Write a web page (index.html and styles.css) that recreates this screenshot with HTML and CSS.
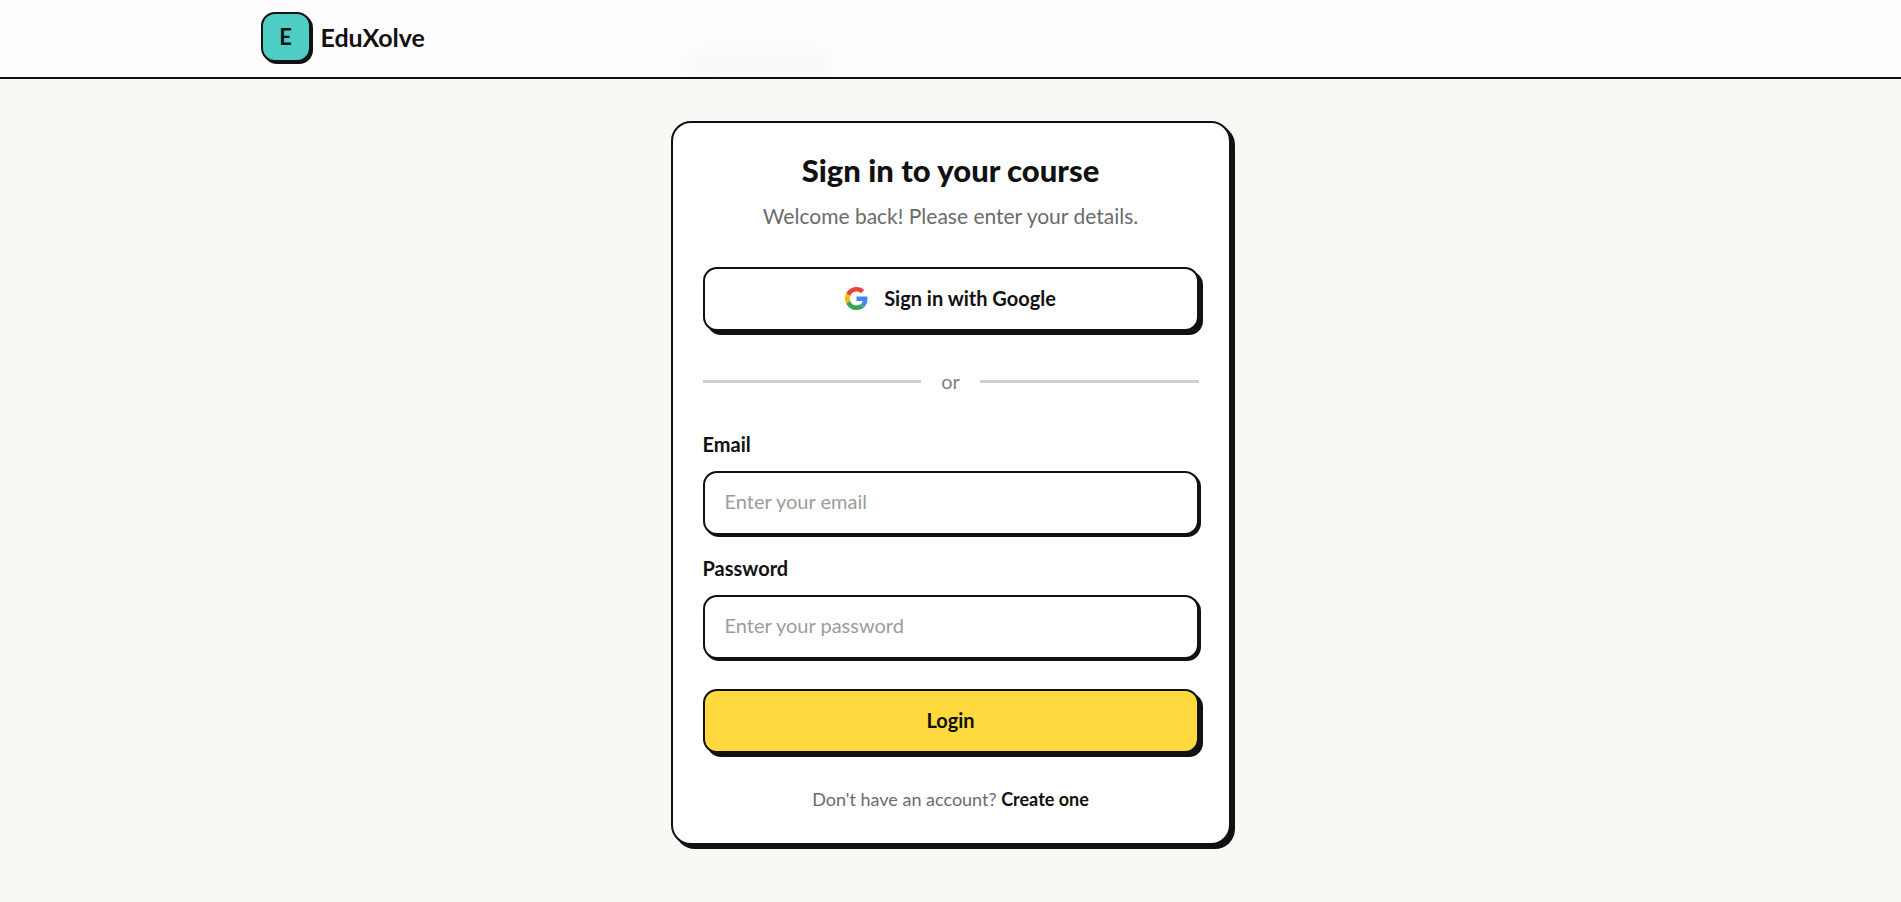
FILE: index.html
```html
<!DOCTYPE html>
<html lang="en">

<head>
    <meta charset="UTF-8">
    <meta name="viewport" content="width=device-width, initial-scale=1.0">
    <title>EduXolve</title>
    <link rel="stylesheet" href="styles.css">
</head>

<body>
    <header class="header">
        <div class="header-glow"></div>
        <div class="header-inner">
            <a class="brand" href="#">
                <span class="brand-mark">E</span>
                <span class="brand-name">EduXolve</span>
            </a>
        </div>
    </header>

    <main class="page">
        <section class="card">
            <h1 class="title">Sign in to your course</h1>
            <p class="subtitle">Welcome back! Please enter your details.</p>

            <button class="btn btn-google" type="button">
                <svg class="google-icon" viewBox="0 0 48 48" aria-hidden="true">
                    <path fill="#EA4335" d="M24 9.5c3.54 0 6.71 1.22 9.21 3.6l6.85-6.85C35.9 2.38 30.47 0 24 0 14.62 0 6.51 5.38 2.56 13.22l7.98 6.19C12.43 13.72 17.74 9.5 24 9.5z"/>
                    <path fill="#4285F4" d="M46.98 24.55c0-1.57-.15-3.09-.38-4.55H24v9.02h12.94c-.58 2.96-2.26 5.48-4.78 7.18l7.73 6c4.51-4.18 7.09-10.36 7.09-17.65z"/>
                    <path fill="#FBBC05" d="M10.53 28.59c-.48-1.45-.76-2.99-.76-4.59s.27-3.14.76-4.59l-7.98-6.19C.92 16.46 0 20.12 0 24c0 3.88.92 7.54 2.56 10.78l7.97-6.19z"/>
                    <path fill="#34A853" d="M24 48c6.48 0 11.93-2.13 15.89-5.81l-7.73-6c-2.15 1.45-4.92 2.3-8.16 2.3-6.26 0-11.57-4.22-13.47-9.91l-7.98 6.19C6.51 42.62 14.62 48 24 48z"/>
                </svg>
                Sign in with Google
            </button>

            <div class="divider">or</div>

            <form class="form" action="#" method="post">
                <div class="field">
                    <label for="email">Email</label>
                    <input type="email" id="email" name="email" placeholder="Enter your email">
                </div>
                <div class="field">
                    <label for="password">Password</label>
                    <input type="password" id="password" name="password" placeholder="Enter your password">
                </div>
                <button class="btn btn-login" type="submit">Login</button>
            </form>

            <p class="signup">Don't have an account? <a href="#">Create one</a></p>
        </section>
    </main>
</body>

</html>
```

FILE: styles.css
```css
* {box-sizing: border-box;}

body {
    margin: 0;
    background: #f9f8f4;
    color: #111;
    font-family: Lato, "Liberation Sans", sans-serif;
    font-size: 20px;
    line-height: 26px;
}

h1, p {margin: 0;}
a {color: #111; text-decoration: none;}

/* header */
.header {
    position: relative;
    overflow: hidden;
    padding: 12px 20px 15px;
    background: #fffdfe;
    border-bottom: 2px solid #111;
}
.header-inner {
    max-width: 1380px;
    margin: 0 auto;
}
/* soft shade behind the bar */
.header-glow {
    position: absolute;
    left: 36%;
    bottom: 4px;
    width: 150px;
    height: 20px;
    background: #f6f7f6;
    border-radius: 10px;
    filter: blur(12px);
}
.brand {
    display: inline-flex;
    align-items: center;
    gap: 10px;
    vertical-align: top;
    font-weight: bold;
}
.brand-mark {
    display: flex;
    align-items: center;
    justify-content: center;
    width: 50px;
    height: 50px;
    background: #4ecdc4;
    border: 2px solid #111;
    border-radius: 14px;
    box-shadow: 2px 2px 0 #111;
    font-size: 22px;
}
.brand-name {font-size: 25px;}

/* card */
.page {
    display: flex;
    justify-content: center;
    padding: 42px 20px;
}
.card {
    width: 100%;
    max-width: 560px;
    padding: 30px;
    background: #fff;
    border: 2px solid #111;
    border-radius: 20px;
    box-shadow: 4px 4px 0 #111;
}
.title {
    margin-bottom: 16px;
    font-size: 31px;
    font-weight: 900;
    line-height: 34px;
    text-align: center;
}
.subtitle {
    margin-bottom: 38px;
    color: #6b6b6b;
    font-size: 21px;
    text-align: center;
}

/* buttons */
.btn {
    display: flex;
    align-items: center;
    justify-content: center;
    gap: 16px;
    width: 100%;
    height: 64px;
    padding: 0 20px 2px;
    border: 2px solid #111;
    border-radius: 14px;
    box-shadow: 4px 4px 0 #111;
    color: #111;
    font: inherit;
    font-weight: bold;
    cursor: pointer;
}
.btn-google {background: #fff;}
.btn-login {margin-top: 9px; background: #ffd93d;}
.google-icon {width: 23px; height: 23px;}

/* or */
.divider {
    display: flex;
    align-items: center;
    gap: 20px;
    margin: 37px 0;
    color: #808080;
}
.divider::before, .divider::after {
    content: "";
    flex: 1;
    height: 3px;
    background: #cfcfcf;
}

/* form */
.form {
    display: flex;
    flex-direction: column;
    gap: 20px;
}
.field {
    display: flex;
    flex-direction: column;
    gap: 14px;
}
.field label {font-weight: bold;}
.field input {
    width: 100%;
    height: 64px;
    padding: 0 20px 4px;
    background: #fff;
    border: 2px solid #111;
    border-radius: 14px;
    box-shadow: 2px 2px 0 #111;
    color: #111;
    font: inherit;
}
.field input::placeholder {color: #9c9c9c;}
.btn-login {margin-top: 10px;}

.signup {
    margin: 33px 0 1px;
    color: #6b6b6b;
    font-size: 18px;
    text-align: center;
}
.signup a {font-weight: bold;}
```
